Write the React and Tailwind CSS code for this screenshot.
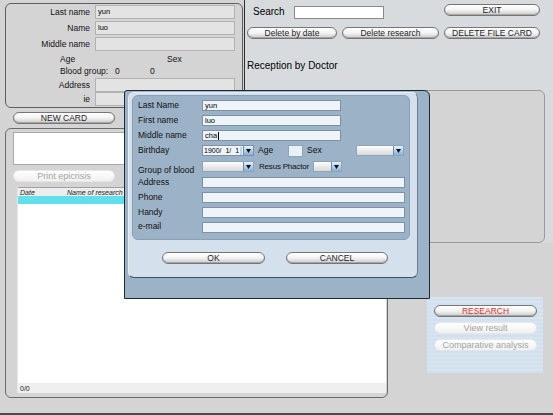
const pill =
  "flex items-center justify-center whitespace-nowrap rounded-full border border-[#767676] bg-linear-to-b from-white via-[#f3f3f3] to-[#c9c9c9] text-[8.5px] leading-none text-[#1e1e1e] shadow-[inset_0_-1px_0_#a5a5a5]";
const pillFaded =
  "flex items-center justify-center whitespace-nowrap rounded-full border border-[#e6e6e6] bg-linear-to-b from-white to-[#f1f1f1] text-[9px] leading-none text-[#a3a3a3]";

function Tri() {
  return (
    <svg width="5" height="4" viewBox="0 0 5 4">
      <path d="M0 0h5L2.5 4z" fill="#111" />
    </svg>
  );
}

function DropBtn() {
  return (
    <div className="flex w-[10px] shrink-0 items-center justify-center border-l border-[#6a8cae] bg-linear-to-b from-[#e6f1fc] to-[#86b0db]">
      <Tri />
    </div>
  );
}

function Combo({ className }) {
  return (
    <div
      className={`flex h-full shrink-0 border border-[#8ea4b9] bg-linear-to-b from-white to-[#d8d8d8] ${className}`}
    >
      <div className="flex-1" />
      <DropBtn />
    </div>
  );
}

function DlgInput({ className, children }) {
  return (
    <div
      className={`flex h-full shrink-0 items-center border border-[#7a91a7] bg-[#eef4fa] px-[2px] text-[7.5px] text-black ${className}`}
    >
      {children}
    </div>
  );
}

function DlgRow({ label, mt, labelClass = "", children }) {
  return (
    <div className={`flex h-[11px] items-center ${mt}`}>
      <span
        className={`w-[69px] shrink-0 whitespace-nowrap pl-[5px] text-[8.5px] leading-none text-[#111] ${labelClass}`}
      >
        {label}
      </span>
      {children}
    </div>
  );
}

function CardRow({ label, value, mt }) {
  return (
    <div className={`flex h-[14px] items-center ${mt}`}>
      <span className="w-[89px] shrink-0 whitespace-nowrap pr-[5px] text-right text-[8.5px] leading-none text-[#111]">
        {label}
      </span>
      <div className="flex h-full w-[140px] items-center border border-[#b2b2b2] bg-[#e3e3e3] px-[2px] text-[7.5px] text-black">
        {value}
      </div>
    </div>
  );
}

export default function App() {
  return (
    <div className="relative grid h-[415px] w-[553px] grid-cols-[5px_239px_144px_1fr] grid-rows-[90px_36px_117px_1fr] overflow-hidden border-b-2 border-[#4a4a4a] bg-[#d4d4d4] font-['Liberation_Sans',Arial,sans-serif]">
      {/* top-left card */}
      <div className="col-start-2 row-span-2 row-start-1 flex flex-col">
        <div className="mt-[3px] flex h-[105px] w-[238px] flex-col rounded-[6px] border border-[#5e5e5e] pt-[1px]">
          <CardRow label="Last name" value="yun" mt="mt-0" />
          <CardRow label="Name" value="luo" mt="mt-[2px]" />
          <CardRow label="Middle name" value="" mt="mt-[2px]" />
          <div className="mt-[2px] flex h-[12px] items-center text-[8.5px] leading-none text-[#111]">
            <span className="ml-[54px] w-[107px]">Age</span>
            <span>Sex</span>
          </div>
          <div className="flex h-[12px] items-center text-[8.5px] leading-none text-[#111]">
            <span className="ml-[54px] w-[55px] whitespace-nowrap">Blood group:</span>
            <span className="w-[35px]">0</span>
            <span>0</span>
          </div>
          <CardRow label="Address" value="" mt="mt-[1px]" />
          <CardRow label="ie" value="" mt="mt-0" />
        </div>
        <div className={`${pill} ml-[8px] mt-[4px] h-[12px] w-[102px]`}>NEW CARD</div>
      </div>

      {/* header */}
      <div className="col-span-2 col-start-3 row-start-1 flex flex-col border-l border-[#2e2e2e] bg-[#d7dbde] pl-[2px] pt-[4px]">
        <div className="grid grid-cols-[90px_97px_96px] grid-rows-[16px_12px] gap-x-[5px] gap-y-[7px]">
          <div className="col-span-2 flex items-start">
            <span className="ml-[6px] mt-[3px] text-[10px] leading-none text-black">Search</span>
            <div className="ml-[9px] mt-[2px] h-[13px] w-[90px] border border-[#8a8a8a] bg-white" />
          </div>
          <div className={`${pill} h-[12px]`}>EXIT</div>
          <div className={`${pill} h-[12px]`}>Delete by date</div>
          <div className={`${pill} h-[12px]`}>Delete research</div>
          <div className={`${pill} h-[12px]`}>DELETE FILE CARD</div>
        </div>
        <div className="mt-[21px] text-[10px] leading-[12px] text-black">Reception by Doctor</div>
      </div>

      {/* right gray panel */}
      <div className="col-start-4 row-span-2 row-start-2 bg-[#d7dbde] pl-[4px] pr-[8px]">
        <div className="h-full rounded-[6px] border border-[#9b9b9b] bg-[#d4d4d4]" />
      </div>

      {/* list panel */}
      <div className="col-span-2 col-start-2 row-span-2 row-start-3 mb-[15px] mt-[2px] flex flex-col rounded-[6px] border border-[#6a6a6a]">
        <div className="ml-[7px] mt-[3px] h-[33px] w-[360px] border border-[#a9a9a9] bg-white" />
        <div className={`${pillFaded} ml-[7px] mt-[5px] h-[12px] w-[102px]`}>Print epicrisis</div>
        <div className="mb-[4px] ml-[11px] mr-[1px] mt-[5px] flex flex-1 flex-col border-l border-[#e6e6e6] bg-white">
          <div className="flex h-[9px] items-center border-t border-[#a0a0a0] bg-[#ededed] text-[7px] italic leading-none text-[#222]">
            <span className="ml-[2px] w-[47px]">Date</span>
            <span>Name of research</span>
          </div>
          <div className="h-[8px] bg-[#5fe0ea]" />
          <div className="flex-1 bg-white" />
          <div className="flex h-[10px] items-center bg-[#efefef] pl-[2px] text-[7px] leading-none text-[#222]">
            0/0
          </div>
        </div>
      </div>

      {/* research actions */}
      <div className="col-start-4 row-start-4">
        <div className="ml-[39px] mt-[54px] flex h-[76px] w-[116px] flex-col bg-[repeating-linear-gradient(0deg,#d1e0ed_0px,#d1e0ed_2px,#d8e5f0_2px,#d8e5f0_4px)] pl-[7px] pt-[8px]">
          <div className={`${pill} h-[12px] w-[103px] text-[#e0302a]`}>RESEARCH</div>
          <div className={`${pillFaded} mt-[5px] h-[12px] w-[103px]`}>View result</div>
          <div className={`${pillFaded} mt-[5px] h-[12px] w-[103px]`}>Comparative analysis</div>
        </div>
      </div>

      {/* dialog */}
      <div className="absolute left-[124px] top-[90px] h-[209px] w-[306px] rounded-tl-[3px] rounded-tr-[6px] border border-[#1d2834] bg-[#9cb2c6] pl-[3px] pt-[1px]">
        <div className="flex h-[186px] w-[290px] flex-col rounded-[6px] border border-[#e6eef5] border-b-[#3f5062] border-r-[#6d8195] bg-[#d4e1ed] pl-[3px] pt-[2px]">
          <div className="flex h-[145px] w-[278px] flex-col rounded-[6px] border border-[#889fb4] bg-[#9cb2c6]">
            <DlgRow label="Last Name" mt="mt-[4px]">
              <DlgInput className="w-[139px]">yun</DlgInput>
            </DlgRow>
            <DlgRow label="First name" mt="mt-[4px]">
              <DlgInput className="w-[139px]">luo</DlgInput>
            </DlgRow>
            <DlgRow label="Middle name" mt="mt-[4px]">
              <DlgInput className="w-[139px]">
                cha<span className="ml-[0.5px] inline-block h-[8px] w-px bg-black" />
              </DlgInput>
            </DlgRow>
            <DlgRow label="Birthday" mt="mt-[4px]">
              <div className="flex h-full w-[52px] shrink-0 border border-[#7a91a7] bg-[#eef4fa]">
                <div className="flex flex-1 items-center whitespace-nowrap pl-[1px] text-[7px] leading-none text-black">
                  1900/&nbsp; 1/&nbsp; 1
                  <span className="ml-[1px] inline-block h-[8px] w-[2px] bg-[#bcd3ea]" />
                </div>
                <DropBtn />
              </div>
              <span className="ml-[4px] w-[30px] shrink-0 text-[8.5px] leading-none text-[#111]">Age</span>
              <div className="h-[12px] w-[15px] shrink-0 border border-[#8ea4b9] bg-[#e8f0f8]" />
              <span className="ml-[4px] w-[49px] shrink-0 text-[8.5px] leading-none text-[#111]">Sex</span>
              <Combo className="w-[48px]" />
            </DlgRow>
            <DlgRow label="Group of blood" mt="mt-[5px]" labelClass="translate-y-[4px]">
              <Combo className="w-[52px]" />
              <span className="ml-[5px] shrink-0 whitespace-nowrap text-[8px] leading-none tracking-[-0.2px] text-[#111]">
                Resus Phactor
              </span>
              <Combo className="ml-[4px] w-[29px]" />
            </DlgRow>
            <DlgRow label="Address" mt="mt-[5px]">
              <DlgInput className="w-[203px]" />
            </DlgRow>
            <DlgRow label="Phone" mt="mt-[4px]">
              <DlgInput className="w-[203px]" />
            </DlgRow>
            <DlgRow label="Handy" mt="mt-[4px]">
              <DlgInput className="w-[203px]" />
            </DlgRow>
            <DlgRow label="e-mail" mt="mt-[4px]" labelClass="-translate-y-[1px]">
              <DlgInput className="w-[203px]" />
            </DlgRow>
          </div>
          <div className="ml-[30px] mt-[12px] flex gap-[21px]">
            <div className={`${pill} h-[12px] w-[103px] text-[7.5px]`}>OK</div>
            <div className={`${pill} h-[12px] w-[102px] text-[7.5px]`}>CANCEL</div>
          </div>
        </div>
      </div>
    </div>
  );
}
